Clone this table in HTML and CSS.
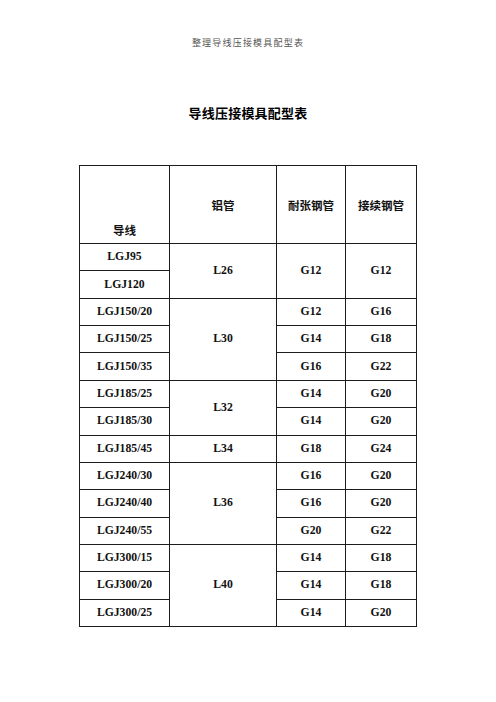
FILE: index.html
```html
<!DOCTYPE html>
<html lang="zh-CN">
<head>
<meta charset="utf-8">
<title>整理导线压接模具配型表</title>
<link rel="stylesheet" href="styles.css">
</head>
<body>
<div class="page">
  <div class="running-head">整理导线压接模具配型表</div>
  <h1 class="title">导线压接模具配型表</h1>
  <table class="mold-table">
    <colgroup>
      <col class="c1"><col class="c2"><col class="c3"><col class="c4">
    </colgroup>
    <tr class="head-row">
      <th class="wire-head">导线</th>
      <th>铝管</th>
      <th>耐张钢管</th>
      <th>接续钢管</th>
    </tr>
    <tr><td>LGJ95</td><td rowspan="2">L26</td><td rowspan="2">G12</td><td rowspan="2">G12</td></tr>
    <tr><td>LGJ120</td></tr>
    <tr><td>LGJ150/20</td><td rowspan="3">L30</td><td>G12</td><td>G16</td></tr>
    <tr><td>LGJ150/25</td><td>G14</td><td>G18</td></tr>
    <tr><td>LGJ150/35</td><td>G16</td><td>G22</td></tr>
    <tr><td>LGJ185/25</td><td rowspan="2">L32</td><td>G14</td><td>G20</td></tr>
    <tr><td>LGJ185/30</td><td>G14</td><td>G20</td></tr>
    <tr><td>LGJ185/45</td><td>L34</td><td>G18</td><td>G24</td></tr>
    <tr><td>LGJ240/30</td><td rowspan="3">L36</td><td>G16</td><td>G20</td></tr>
    <tr><td>LGJ240/40</td><td>G16</td><td>G20</td></tr>
    <tr><td>LGJ240/55</td><td>G20</td><td>G22</td></tr>
    <tr><td>LGJ300/15</td><td rowspan="3">L40</td><td>G14</td><td>G18</td></tr>
    <tr><td>LGJ300/20</td><td>G14</td><td>G18</td></tr>
    <tr><td>LGJ300/25</td><td>G14</td><td>G20</td></tr>
  </table>
</div>
</body>
</html>
```

FILE: styles.css
```css
html, body {
  margin: 0;
  padding: 0;
  background: #ffffff;
}

.page {
  width: 496px;
  padding-top: 37px;
  font-family: "Liberation Serif", "Noto Sans CJK SC", serif;
  color: #111;
}

.running-head {
  font-family: "Noto Sans CJK SC", sans-serif;
  font-size: 9px;
  line-height: 12px;
  letter-spacing: 1.2px;
  color: #555;
  text-align: center;
}

.title {
  margin: 55px 0 0 0;
  font-family: "Noto Sans CJK SC", sans-serif;
  font-size: 13px;
  line-height: 18px;
  font-weight: 700;
  letter-spacing: 0.2px;
  text-align: center;
  color: #000;
}

.mold-table {
  margin: 43px 0 0 79px;
  border-collapse: collapse;
  table-layout: fixed;
  width: 337px;
}

.c1 { width: 90px; }
.c2 { width: 107px; }
.c3 { width: 69px; }
.c4 { width: 71px; }

.mold-table th,
.mold-table td {
  border: 1.3px solid #1c1c1c;
  padding: 0;
  text-align: center;
  vertical-align: middle;
  font-weight: 700;
}

.mold-table th {
  font-family: "Noto Sans CJK SC", sans-serif;
  font-size: 11.5px;
  line-height: 14px;
  color: #111;
}

.head-row {
  height: 78px;
}

.mold-table th.wire-head {
  vertical-align: bottom;
  padding-bottom: 6px;
}

.mold-table tr.data-row,
.mold-table tr {
  height: 27.36px;
}

.mold-table tr.head-row {
  height: 78px;
}

.mold-table td {
  font-family: "Liberation Serif", serif;
  font-size: 11.7px;
  line-height: 14px;
  color: #111;
}
```
